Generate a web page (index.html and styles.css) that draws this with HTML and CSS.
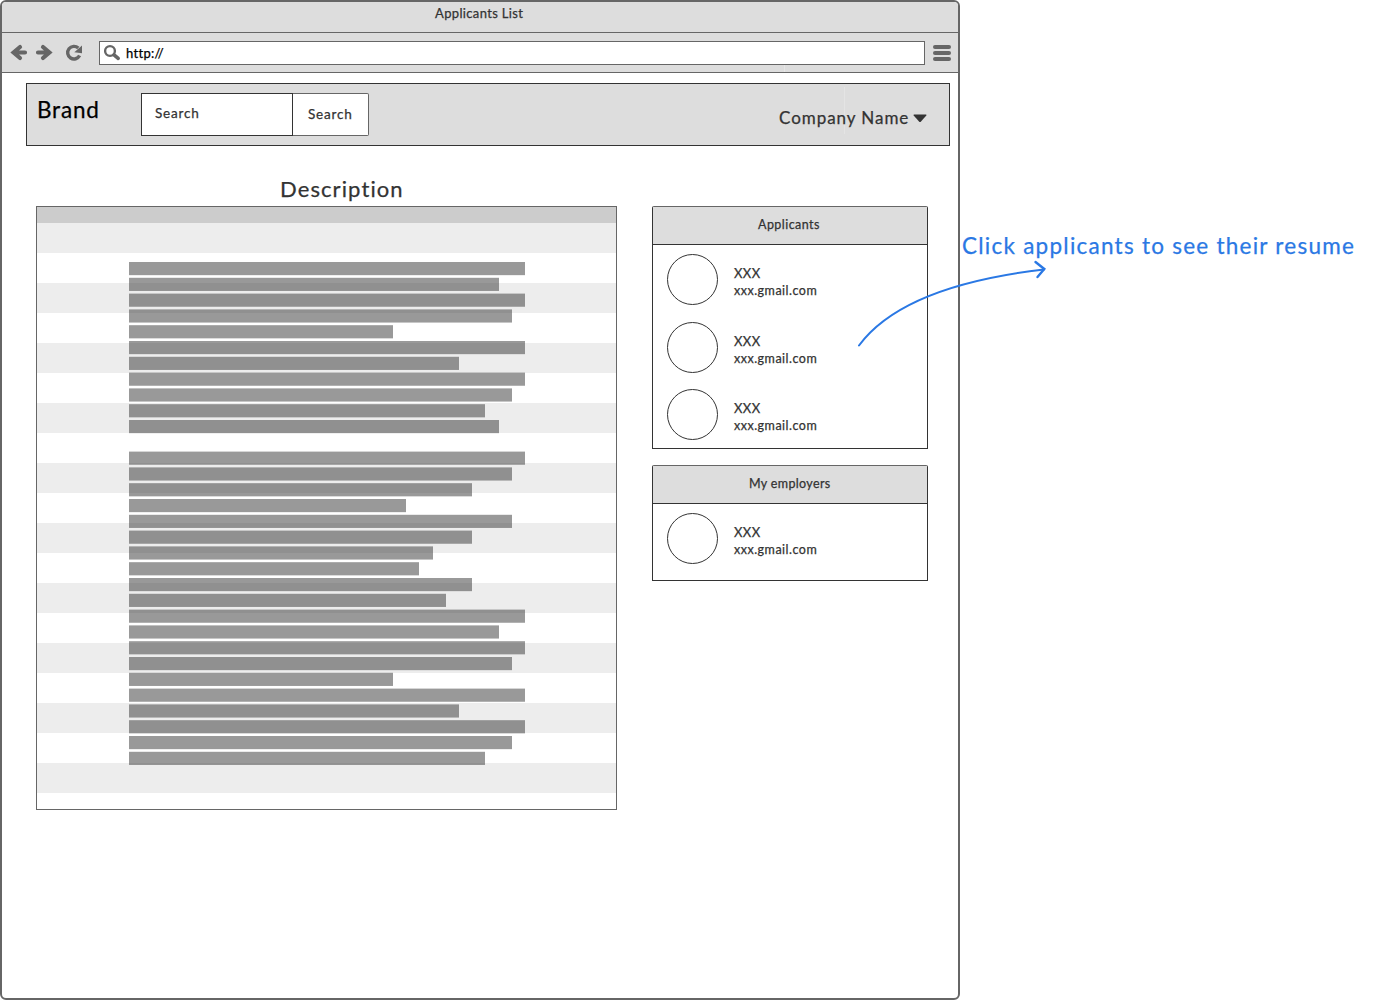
FILE: index.html
```html
<!DOCTYPE html>
<html lang="en">
<head>
<meta charset="utf-8">
<title>Applicants List</title>
<link rel="stylesheet" href="styles.css">
</head>
<body>
<div class="canvas">
  <div class="window">
    <header class="titlebar">Applicants List</header>
    <div class="toolbar">
      <svg width="97" height="39" viewBox="2 33 97 39">
        <g fill="none" stroke="#666" stroke-width="4.2" stroke-linecap="round">
          <path d="M17 52.5H25M20 47L13.6 52.5L20 58M38 52.5H46M43 47L49.4 52.5L43 58"/>
          <path stroke-width="3.4" stroke-linecap="butt" d="M78.3 48.1A6.3 6.3 0 1 0 79.6 55.5"/>
        </g>
        <path fill="#666" d="M82 45.5V53.3L74.3 52.2Z"/>
      </svg>
      <div class="address">
        <svg width="22" height="22" viewBox="100 42 22 22">
          <circle cx="110" cy="51" r="4.9" fill="none" stroke="#666" stroke-width="2.4"/>
          <path d="M114 54.8L118.2 58.4" stroke="#666" stroke-width="3.6" stroke-linecap="round"/>
        </svg>
        <span class="url">http://</span>
      </div>
      <div class="menu"><i></i><i></i><i></i></div>
    </div>
    <nav class="navbar">
      <span class="brand">Brand</span>
      <div class="search-field">Search</div>
      <div class="search-button">Search</div>
      <div class="company"><span class="company-name">Company Name</span>
        <svg width="14" height="9" viewBox="0 0 14 9"><path fill="#333" d="M1 .5H13Q14 .8 13.3 1.6L8 7.6Q7 8.6 6 7.6L.7 1.6Q0 .8 1 .5Z"/></svg>
      </div>
    </nav>
    <main class="content">
      <section class="description">
        <h1>Description</h1>
        <div class="sheet">
          <svg id="lines" width="400" height="510" viewBox="0 0 400 510" fill="#333" fill-opacity=".5"></svg>
        </div>
      </section>
      <aside class="side">
        <section class="card applicants">
          <h2>Applicants</h2>
          <div class="person"><i class="avatar"></i><p><span class="name">XXX</span><span class="mail">xxx.gmail.com</span></p></div>
          <div class="person"><i class="avatar"></i><p><span class="name">XXX</span><span class="mail">xxx.gmail.com</span></p></div>
          <div class="person"><i class="avatar"></i><p><span class="name">XXX</span><span class="mail">xxx.gmail.com</span></p></div>
        </section>
        <section class="card employers">
          <h2>My employers</h2>
          <div class="person"><i class="avatar"></i><p><span class="name">XXX</span><span class="mail">xxx.gmail.com</span></p></div>
        </section>
      </aside>
    </main>
  </div>
  <p class="note">Click applicants to see their resume</p>
  <svg class="arrow" width="200" height="100" viewBox="850 255 200 100" fill="none" stroke="#2a78e4" stroke-width="2" stroke-linecap="round">
    <path d="M859 345.5Q903 286 1044 269.5"/>
    <path stroke-width="2.4" d="M1035.5 262L1044.3 269L1037.5 277"/>
  </svg>
</div>
<script src="lines.js"></script>
</body>
</html>
```
FILE: lines.js
```js
// Widths of the placeholder text lines; 0 is the paragraph break.
const widths = [396, 370, 396, 383, 264, 396, 330, 396, 383, 356, 370, 0,
  396, 383, 343, 277, 383, 343, 304, 290, 343, 317, 396, 370, 396, 383, 264, 396, 330, 396, 383, 356];
const svg = document.getElementById('lines');
widths.forEach((w, i) => {
  const r = document.createElementNS('http://www.w3.org/2000/svg', 'rect');
  r.setAttribute('y', (i * 15.8).toFixed(1));
  r.setAttribute('width', w);
  r.setAttribute('height', 13.15);
  svg.append(r);
});
```
FILE: styles.css
```css
* { box-sizing: border-box; }
body { margin: 0; background: #fff; color: #333; font-family: Lato, "Liberation Sans", sans-serif; font-variant-ligatures: none; -webkit-text-stroke: .25px currentColor; }
h1, h2, p { margin: 0; font-weight: 400; }
svg { display: block; flex: none; }
.canvas { position: relative; display: flex; width: 1383px; height: 1000px; overflow: hidden; }
.window { flex: none; width: 960px; height: 1000px; border: 2px solid #666; border-radius: 6px; background: #fff; overflow: hidden; }
.titlebar { height: 31px; background: #ddd; border-bottom: 1px solid #666; padding-left: 433px; font-size: 13px; line-height: 22px; letter-spacing: .35px; }
.toolbar { display: flex; height: 40px; background: linear-gradient(#e6e6e6, #e6e6e6) 782px 100% / 1px 8px no-repeat #ddd; border-bottom: 1px solid #666; }
.address { display: flex; width: 826px; height: 24px; margin-top: 8px; background: #fff; border: 1px solid #666; font-size: 13px; line-height: 22px; letter-spacing: .3px; color: #000; }
.url { margin-left: 4px; }
.menu { display: flex; flex-direction: column; gap: 2px; padding: 12px 0 0 8px; }
.menu i { width: 18px; height: 4px; border-radius: 2px; background: #666; }
.navbar { display: flex; width: 924px; height: 63px; margin: 10px 0 0 24px; padding: 9px 0 0 10px; background: linear-gradient(#e4e4e4, #e4e4e4) 817px 3px / 1px 47px no-repeat #ddd; border: 1px solid #333; white-space: nowrap; }
.brand { width: 104px; font-size: 22.5px; line-height: 34px; letter-spacing: .8px; color: #000; }
.search-field { width: 152px; height: 43px; background: #fff; border: 1px solid #333; padding-left: 13px; font-size: 13.5px; line-height: 38px; letter-spacing: .8px; }
.search-button { width: 76px; height: 43px; background: #fff; border: 1px solid #666; border-left: 0; border-radius: 0 2px 2px 0; padding-left: 15px; font-size: 13.5px; line-height: 40px; letter-spacing: .8px; }
.company { display: flex; margin-left: 410px; font-size: 17px; line-height: 50px; letter-spacing: .95px; }
.company-name { width: 130px; }
.company svg { margin: 21px 0 0 4px; }
.content { display: flex; padding: 30px 0 0 34px; }
.description { width: 581px; }
.description h1 { height: 30px; padding-left: 244px; font-size: 22px; line-height: 26px; letter-spacing: 1.1px; }
.sheet { height: 604px; border: 1px solid #666; padding: 55px 0 0 92px; background: linear-gradient(#ccc 16px, transparent 16px), repeating-linear-gradient(#ededed 0 30px, #fff 30px 60px) 0 16px; }
.side { width: 276px; margin: 30px 0 0 35px; }
.card { border: 1px solid #333; border-radius: 2px 2px 0 0; border-top-color: #666; }
.card h2 { height: 38px; border-bottom: 1px solid #333; background: #ddd; font-size: 12.5px; line-height: 36px; letter-spacing: .45px; }
.applicants { height: 243px; }
.employers { height: 116px; margin-top: 16px; }
.applicants h2 { padding-left: 105px; }
.employers h2 { padding-left: 96px; letter-spacing: .35px; }
.person { display: flex; height: 67.5px; padding: 9px 0 0 14px; }
.avatar { width: 51px; height: 51px; border: 1px solid #333; border-radius: 50%; }
.person p { display: flex; flex-direction: column; align-items: flex-start; padding: 11px 0 0 16px; line-height: 17px; }
.name { font-size: 13px; letter-spacing: .4px; }
.mail { font-size: 12.5px; letter-spacing: .5px; }
.note { padding: 233px 0 0 2px; font-size: 22.5px; line-height: 25px; letter-spacing: 1.25px; color: #2a78e4; white-space: nowrap; }
.arrow { position: absolute; left: 850px; top: 255px; }
```
